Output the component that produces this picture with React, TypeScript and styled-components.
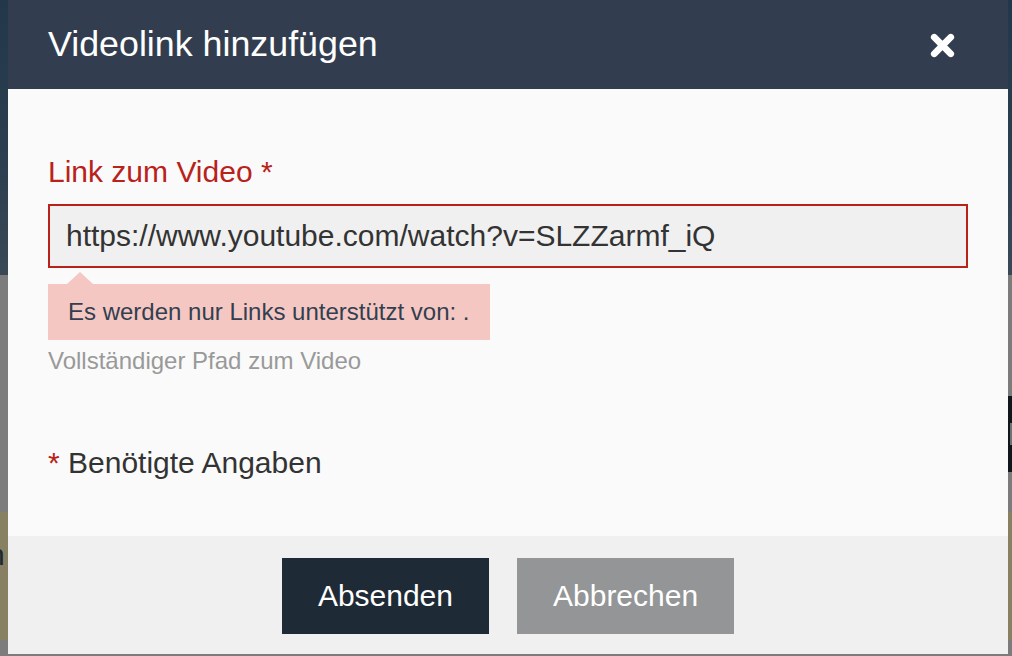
import React from "react";
import styled, { createGlobalStyle } from "styled-components";

const GlobalStyle = createGlobalStyle`
  html, body {
    margin: 0;
    padding: 0;
    overflow: hidden;
    font-family: "Liberation Sans", Arial, Helvetica, sans-serif;
  }
  * { box-sizing: border-box; }
`;

const Page = styled.div`
  width: 1012px;
  height: 656px;
  display: flex;
  flex-direction: column;
  background: #7c7c7c;
`;

const Hero = styled.div`
  height: 275px;
  background: linear-gradient(180deg, #22374a 0%, #2b3f50 60%, #3a4856 100%);
`;

const GraySection = styled.div`
  height: 237px;
  display: flex;
  justify-content: flex-end;
  align-items: flex-start;
  padding-top: 121px;
  background: #7c7c7c;
`;

const DarkTab = styled.div`
  width: 8px;
  height: 76px;
  background: #0f171c;
  display: flex;
  align-items: center;
  justify-content: flex-end;
`;

const DarkTabMark = styled.div`
  width: 2px;
  height: 22px;
  background: #6e7275;
`;

const Band = styled.div`
  height: 128px;
  background: #878062;
  display: flex;
  align-items: flex-start;
  padding-top: 25px;
`;

const BandText = styled.span`
  font-size: 30px;
  line-height: 36px;
  color: #1d2830;
  margin-left: -12px;
`;

/* ---------- dialog ---------- */
const Dialog = styled.div`
  position: fixed;
  top: 0;
  left: 8px;
  width: 1000px;
  display: flex;
  flex-direction: column;
  background: #fafafa;
`;

const Header = styled.div`
  height: 89px;
  background: #323e4f;
  display: flex;
  align-items: center;
  justify-content: space-between;
  padding: 0 53px 2px 40px;
`;

const Title = styled.h2`
  margin: 0;
  font-size: 35.8px;
  line-height: 36px;
  font-weight: 400;
  color: #ffffff;
`;

const CloseButton = styled.button`
  border: 0;
  padding: 0;
  background: transparent;
  width: 25px;
  height: 25px;
  display: flex;
  cursor: pointer;
  margin-top: 3px;
`;

const Body = styled.div`
  padding: 65px 40px 55px 40px;
  display: flex;
  flex-direction: column;
  align-items: flex-start;
`;

const Label = styled.label`
  font-size: 30px;
  line-height: 36px;
  color: #b9221b;
  margin-bottom: 14px;
`;

const Input = styled.input`
  width: 100%;
  height: 64px;
  border: 2px solid #b9221b;
  background: #f0f0f0;
  padding: 0 16px;
  font-family: "Liberation Sans", Arial, sans-serif;
  font-size: 30px;
  color: #333333;
  outline: none;
  margin: 0;
`;

const ErrorBubble = styled.div`
  position: relative;
  margin-top: 16px;
  height: 56px;
  display: flex;
  align-items: center;
  padding: 0 20px;
  background: #f5c7c3;
  color: #323f4f;
  font-size: 24px;

  &::before {
    content: "";
    position: absolute;
    left: 19px;
    top: -12px;
    border-left: 13px solid transparent;
    border-right: 13px solid transparent;
    border-bottom: 12px solid #f5c7c3;
  }
`;

const Help = styled.div`
  margin-top: 7px;
  font-size: 24px;
  line-height: 28px;
  color: #999999;
`;

const Required = styled.div`
  margin-top: 70px;
  font-size: 30px;
  line-height: 36px;
  color: #333333;
`;

const Star = styled.span`
  color: #b9221b;
`;

const Footer = styled.div`
  background: #f0f0f0;
  padding: 22px 0 20px;
  display: flex;
  justify-content: center;
  gap: 28px;
`;

const Button = styled.button<{ $variant: "primary" | "secondary" }>`
  height: 76px;
  padding: 0 36px;
  border: 0;
  margin: 0;
  font-family: "Liberation Sans", Arial, sans-serif;
  font-size: 30px;
  color: #ffffff;
  cursor: pointer;
  background: ${(p) => (p.$variant === "primary" ? "#1e2a35" : "#939596")};
`;

export default function App() {
  return (
    <>
      <GlobalStyle />
      <Page>
        <Hero />
        <GraySection>
          <DarkTab>
            <DarkTabMark />
          </DarkTab>
        </GraySection>
        <Band>
          <BandText>n</BandText>
        </Band>
      </Page>
      <Dialog role="dialog" aria-labelledby="dlg-title">
        <Header>
          <Title id="dlg-title">Videolink hinzufügen</Title>
          <CloseButton aria-label="Schließen">
            <svg width="25" height="25" viewBox="0 0 25 25">
              <path
                d="M4.2 4.2 L20.8 20.8 M20.8 4.2 L4.2 20.8"
                stroke="#ffffff"
                strokeWidth="6.6"
                strokeLinecap="round"
                fill="none"
              />
            </svg>
          </CloseButton>
        </Header>
        <Body>
          <Label htmlFor="video-link">Link zum Video *</Label>
          <Input
            id="video-link"
            defaultValue="https://www.youtube.com/watch?v=SLZZarmf_iQ"
          />
          <ErrorBubble>Es werden nur Links unterstützt von: .</ErrorBubble>
          <Help>Vollständiger Pfad zum Video</Help>
          <Required>
            <Star>*</Star> Benötigte Angaben
          </Required>
        </Body>
        <Footer>
          <Button $variant="primary">Absenden</Button>
          <Button $variant="secondary">Abbrechen</Button>
        </Footer>
      </Dialog>
    </>
  );
}
